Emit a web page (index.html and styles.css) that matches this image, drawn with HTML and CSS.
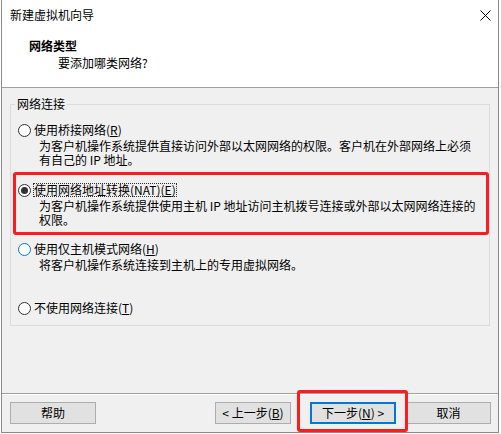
FILE: index.html
```html
<!DOCTYPE html>
<html lang="zh-CN">
<head>
<meta charset="utf-8">
<title>新建虚拟机向导</title>
<link rel="stylesheet" href="styles.css">
</head>
<body>
<div class="window">
  <div class="titlebar">
    <span class="title">新建虚拟机向导</span>
    <svg class="close" width="11" height="11" viewBox="0 0 11 11"><path d="M0.5 0.5 L10.5 10.5 M10.5 0.5 L0.5 10.5" stroke="#000" stroke-width="1" fill="none"/></svg>
  </div>
  <div class="header">
    <div class="h-title">网络类型</div>
    <div class="h-sub">要添加哪类网络?</div>
  </div>
  <div class="content">
    <fieldset class="group">
      <legend>网络连接</legend>
      <div class="options">
        <div class="option opt-bridge">
          <div class="radio-row"><span class="radio"></span><span class="label">使用桥接网络(<u>R</u>)</span></div>
          <div class="desc">为客户机操作系统提供直接访问外部以太网网络的权限。客户机在外部网络上必须<br>有自己的 IP 地址。</div>
        </div>
        <div class="option opt-nat">
          <div class="radio-row"><span class="radio checked"></span><span class="label focused">使用网络地址转换(NAT)(<u>E</u>)</span></div>
          <div class="desc">为客户机操作系统提供使用主机 IP 地址访问主机拨号连接或外部以太网网络连接的<br>权限。</div>
        </div>
        <div class="option opt-host">
          <div class="radio-row"><span class="radio hover"></span><span class="label">使用仅主机模式网络(<u>H</u>)</span></div>
          <div class="desc">将客户机操作系统连接到主机上的专用虚拟网络。</div>
        </div>
        <div class="option opt-none">
          <div class="radio-row"><span class="radio"></span><span class="label">不使用网络连接(<u>T</u>)</span></div>
        </div>
      </div>
    </fieldset>
  </div>
  <div class="footer">
    <button class="btn btn-help">帮助</button>
    <div class="spacer"></div>
    <button class="btn btn-back">&lt; 上一步(<u>B</u>)</button>
    <button class="btn btn-next">下一步(<u>N</u>) &gt;</button>
    <button class="btn btn-cancel">取消</button>
  </div>
</div>
<div class="mark mark-nat"></div>
<div class="mark mark-next"></div>
</body>
</html>
```
FILE: styles.css
```css
* { box-sizing: border-box; }
html, body {
  margin: 0;
  padding: 0;
  width: 501px;
  height: 434px;
  background: #ffffff;
  overflow: hidden;
}
body {
  font-family: "Noto Sans CJK SC", "Liberation Sans", sans-serif;
  font-size: 12px;
  color: #000;
  position: relative;
}
.window {
  margin-left: 1px;
  width: 498px;
  height: 433px;
  border-left: 1px solid #8a8a8a;
  border-right: 1px solid #8a8a8a;
  border-bottom: 1px solid #8a8a8a;
  background: #f0f0f0;
  display: flex;
  flex-direction: column;
}
.titlebar {
  height: 30px;
  background: #fff;
  display: flex;
  align-items: center;
  justify-content: space-between;
  padding: 0 7px 0 8px;
  line-height: 16px;
}
.close { display: block; }
.header {
  height: 58px;
  background: #fff;
  border-bottom: 1px solid #a0a0a0;
  padding-top: 8px;
  line-height: 16px;
}
.h-title {
  font-weight: bold;
  padding-left: 27px;
}
.h-sub {
  padding-left: 56px;
  margin-top: 1px;
}
.content {
  height: 305px;
  padding: 9px 0 0 8px;
}
.group {
  width: 480px;
  margin: 0;
  padding: 0;
  border: 1px solid #dcdcdc;
  min-width: 0;
}
.group legend {
  margin-left: 4px;
  padding: 0 2px;
  line-height: 14px;
}
.options {
  padding: 11px 7px 9px 7px;
  display: flex;
  flex-direction: column;
}
.radio-row {
  height: 16px;
  display: flex;
  align-items: center;
  gap: 2px;
}
.radio {
  width: 13px;
  height: 13px;
  border-radius: 50%;
  border: 1px solid #333;
  background: #fff;
  position: relative;
  flex: none;
}
.radio.hover { border-color: #0078d7; }
.radio.checked::after {
  content: "";
  position: absolute;
  left: 2px;
  top: 2px;
  width: 7px;
  height: 7px;
  border-radius: 50%;
  background: #333;
}
.label {
  line-height: 12px;
  border: 1px dotted transparent;
  padding: 0;
}
.label.focused { border-color: #333; }
.desc {
  margin-top: 1px;
  margin-left: 21px;
  line-height: 14px;
}
.opt-nat { margin-top: 15px; }
.opt-host { margin-top: 14px; }
.opt-none { margin-top: 28px; }
.footer {
  flex: 1;
  border-top: 1px solid #a0a0a0;
  box-shadow: inset 0 1px 0 #ffffff;
  display: flex;
  align-items: flex-start;
  padding: 8px 7px 0 8px;
}
.spacer { flex: 1; }
.btn {
  height: 22px;
  background: #e1e1e1;
  border: 1px solid #adadad;
  font-family: inherit;
  font-size: 12px;
  color: #000;
  padding: 0;
  line-height: 18px;
  margin: 0;
}
.btn-help { width: 86px; }
.btn-back { width: 76px; }
.btn-next {
  width: 86px;
  margin-left: 19px;
  border: 2px solid #0078d7;
}
.btn-cancel { width: 85px; margin-left: 10px; }
.mark {
  position: absolute;
  border: 3px solid #ff1c1c;
  border-radius: 3px;
}
.mark-nat {
  left: 13px;
  top: 172px;
  width: 476px;
  height: 63px;
}
.mark-next {
  left: 297px;
  top: 390px;
  width: 111px;
  height: 42px;
}
```
